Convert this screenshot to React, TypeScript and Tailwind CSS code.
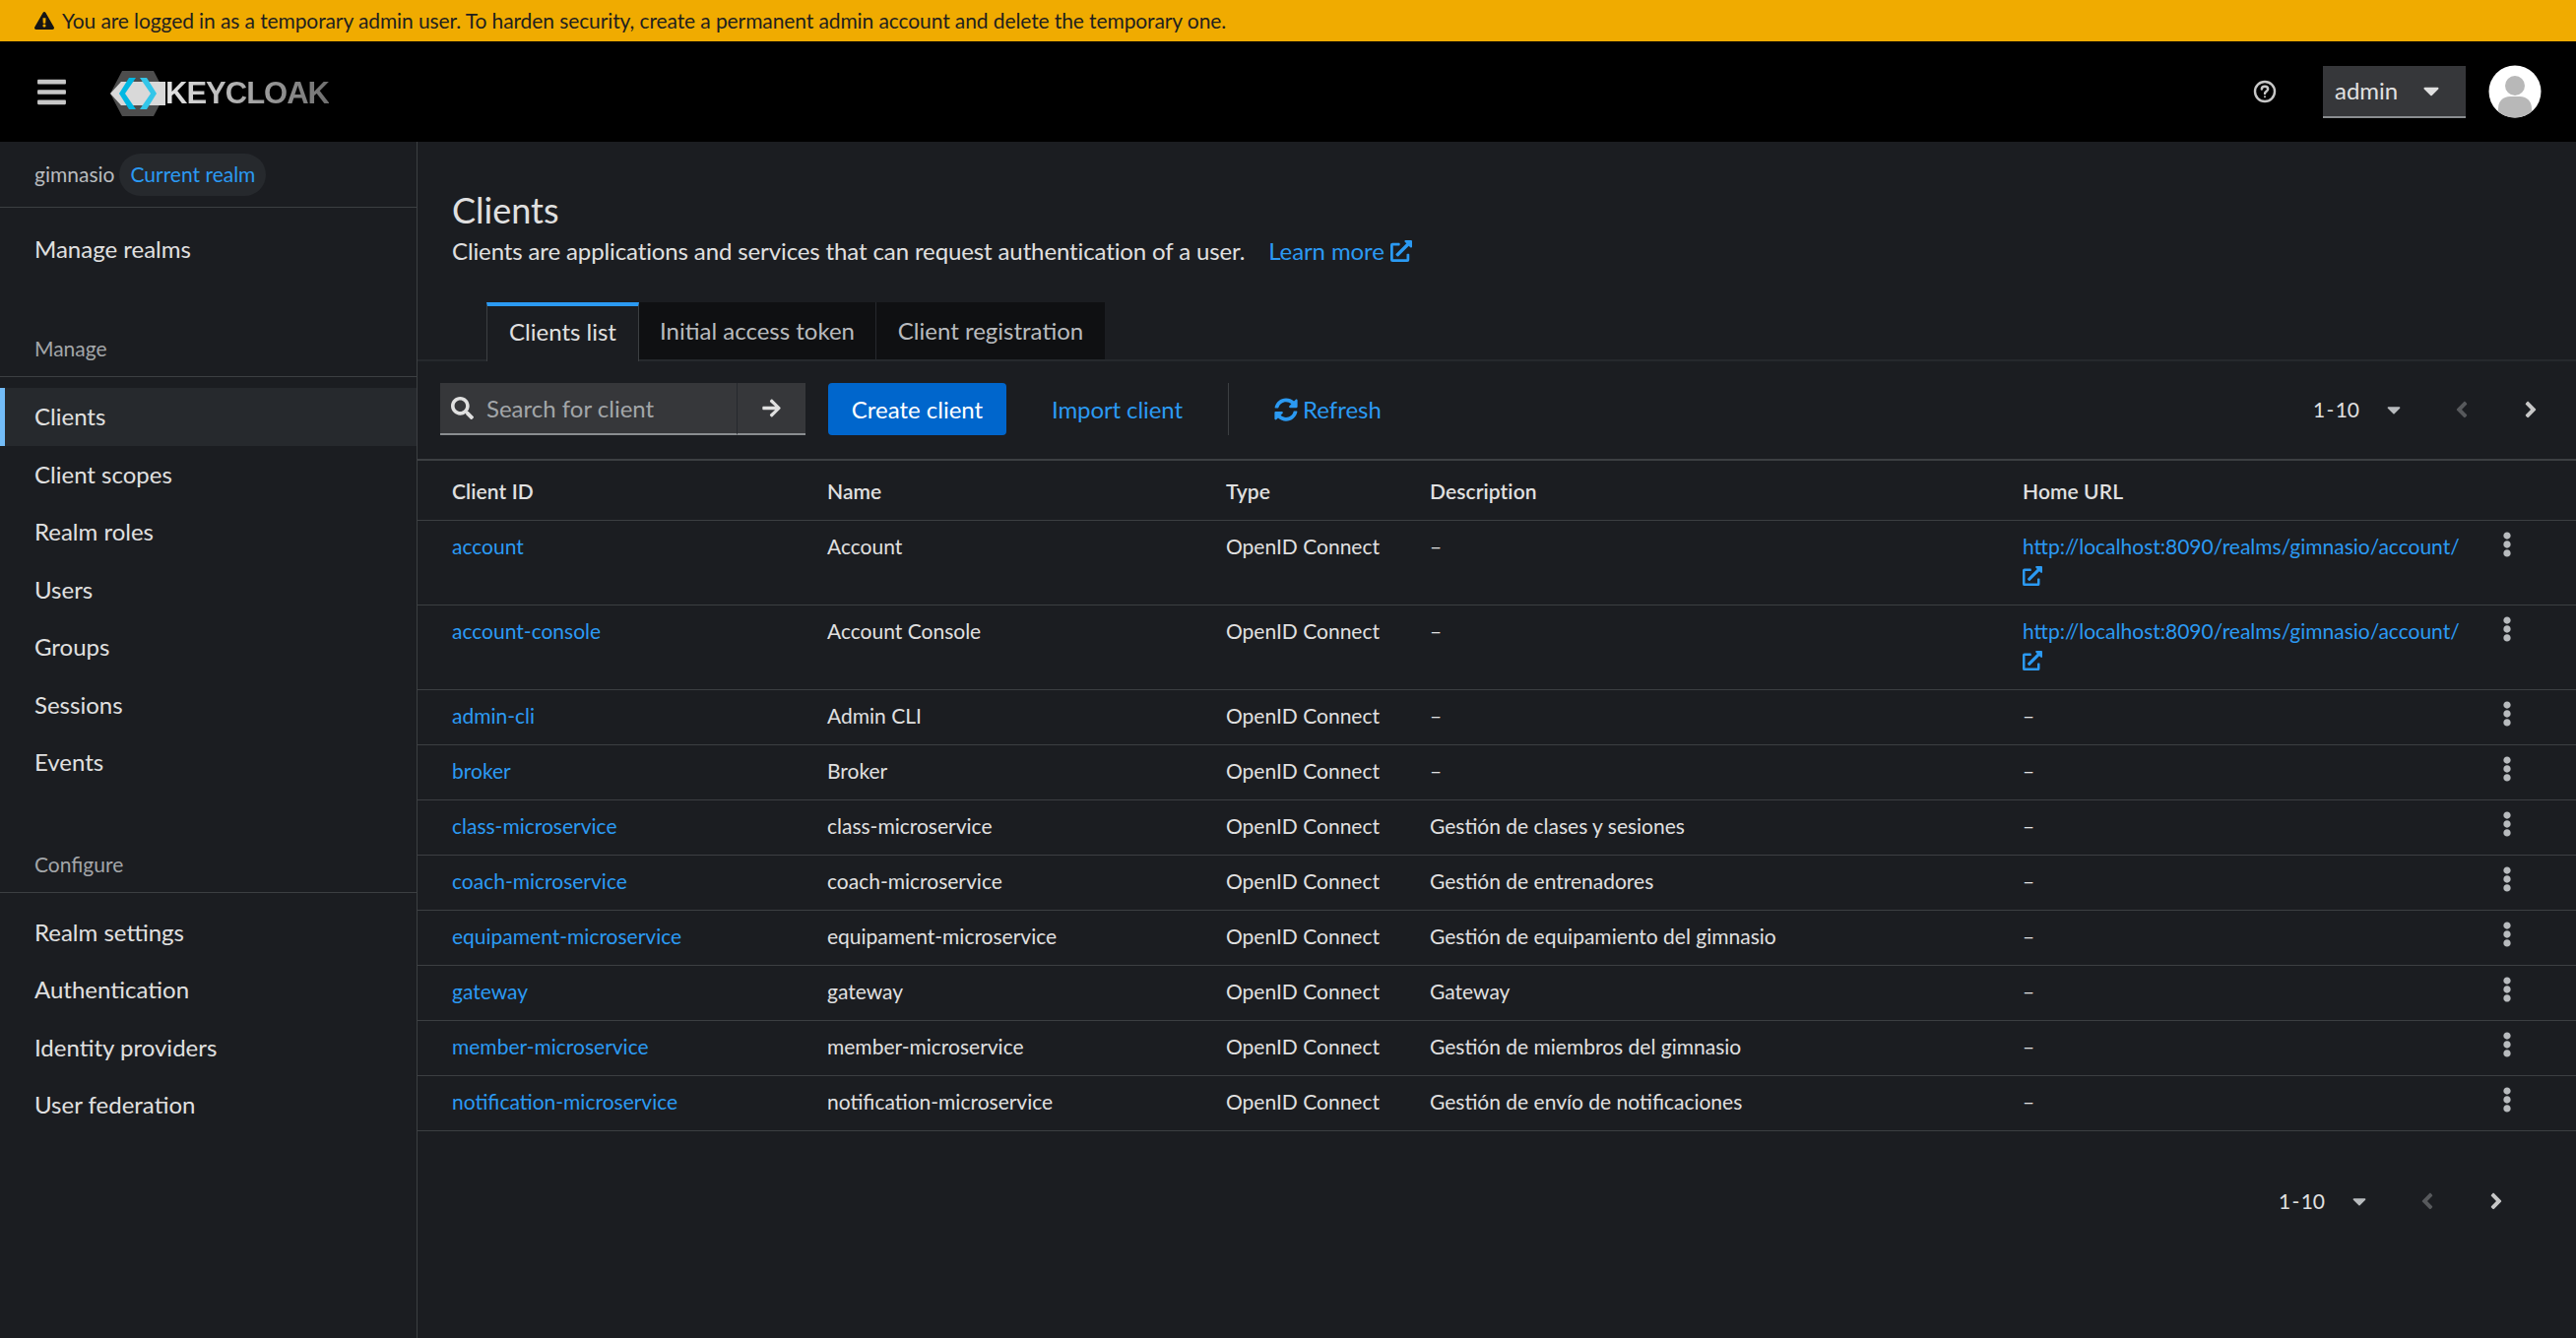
import React from "react";
import { FaExclamationTriangle, FaBars, FaCaretDown, FaExternalLinkAlt, FaSearch, FaArrowRight, FaSyncAlt, FaEllipsisV, FaAngleLeft, FaAngleRight } from "react-icons/fa";

const font = { fontFamily: 'Lato, "Noto Sans", sans-serif' };

function Logo() {
  return (
    <div className="flex items-center">
      <svg width="56" height="46" viewBox="0 0 56 46" className="shrink-0">
        <path d="M12 0 H44 L56 23 L44 46 H12 L0 23 Z" fill="#4d4d4d" />
        <path d="M0 23 L11 11 H56 V35 H11 Z" fill="#d9d9d9" />
        <path d="M19 7 L26 7 L15 23 L26 39 L19 39 L9 23 Z" fill="#00b8e3" />
        <path d="M37 7 L30 7 L41 23 L30 39 L37 39 L47 23 Z" fill="#33c6e9" />
      </svg>
      <span className="text-[31px] leading-none font-bold tracking-[-1px] bg-gradient-to-r from-[#e6e6e6] via-[#a8a8a8] to-[#6f6f6f] bg-clip-text text-transparent" style={{ fontFamily: '"Liberation Sans", sans-serif' }}>KEYCLOAK</span>
    </div>
  );
}

function HelpIcon() {
  return (
    <svg width="24" height="24" viewBox="0 0 24 24" fill="none" stroke="#c7c7c7" strokeWidth="2.4">
      <circle cx="12" cy="12" r="10" />
      <path d="M8.8 9.6 C8.8 7.6 10.4 6.8 12 6.8 C13.8 6.8 15.2 7.9 15.2 9.5 C15.2 11.6 12 11.8 12 14" strokeLinecap="round" />
      <circle cx="12" cy="17.2" r="1" fill="#c7c7c7" stroke="none" />
    </svg>
  );
}

function Avatar() {
  return (
    <svg width="54" height="54" viewBox="0 0 54 54" className="shrink-0">
      <clipPath id="av"><circle cx="27" cy="27" r="26.5" /></clipPath>
      <circle cx="27" cy="27" r="26.5" fill="#ffffff" />
      <g clipPath="url(#av)">
        <circle cx="27" cy="21" r="10" fill="#b8b8b8" />
        <path d="M10 54 V44 C10 36 16 32 22 32 H32 C38 32 44 36 44 44 V54 Z" fill="#b8b8b8" />
      </g>
    </svg>
  );
}

function Pager() {
  return (
    <div className="flex items-center text-[21px] text-[#e0e0e0]">
      <span className="leading-none whitespace-nowrap [word-spacing:-4px]">1 - 10</span>
      <FaCaretDown className="ml-[24px] text-[#b8bbbe] text-[22px]" />
      <FaAngleLeft className="ml-[45px] text-[#57595c] text-[26px]" />
      <FaAngleRight className="ml-[44px] text-[#c7c7c7] text-[26px]" />
    </div>
  );
}

function NavItem({ label, active }: { label: string; active?: boolean }) {
  return (
    <div className={active ? "h-[58.5px] pl-[30px] flex items-center border-l-[5px] border-[#73bcf7] bg-[#26292d] text-[24px] text-[#e0e0e0]" : "h-[58.5px] pl-[35px] flex items-center text-[24px] text-[#e0e0e0]"}>
      {label}
    </div>
  );
}

type Row = { id: string; name: string; desc: string; url?: boolean };
const rows: Row[] = [
  { id: "account", name: "Account", desc: "–", url: true },
  { id: "account-console", name: "Account Console", desc: "–", url: true },
  { id: "admin-cli", name: "Admin CLI", desc: "–" },
  { id: "broker", name: "Broker", desc: "–" },
  { id: "class-microservice", name: "class-microservice", desc: "Gestión de clases y sesiones" },
  { id: "coach-microservice", name: "coach-microservice", desc: "Gestión de entrenadores" },
  { id: "equipament-microservice", name: "equipament-microservice", desc: "Gestión de equipamiento del gimnasio" },
  { id: "gateway", name: "gateway", desc: "Gateway" },
  { id: "member-microservice", name: "member-microservice", desc: "Gestión de miembros del gimnasio" },
  { id: "notification-microservice", name: "notification-microservice", desc: "Gestión de envío de notificaciones" },
];

export default function App() {
  return (
    <div className="h-[1359px] w-[2616px] overflow-hidden flex flex-col bg-[#1b1d21] text-[#e0e0e0]" style={font}>
      <div className="h-[42px] shrink-0 bg-[#f0ab00] flex items-center pl-[35px] text-[21px] tracking-[-0.1px] text-[#1f1f1f]">
        <FaExclamationTriangle className="text-[20px] mr-[8px] text-[#151515]" />
        <span>You are logged in as a temporary admin user. To harden security, create a permanent admin account and delete the temporary one.</span>
      </div>
      <header className="h-[102px] shrink-0 bg-black flex items-center pl-[36px] pr-[35px]">
        <FaBars className="text-[33px] text-[#c7c7c7]" />
        <div className="ml-[43px] mt-[3px]"><Logo /></div>
        <div className="ml-auto flex items-center">
          <HelpIcon />
          <div className="ml-[47px] w-[145px] h-[53px] bg-[#36373a] border-b-2 border-[#8a8d90] flex items-center pl-[12px] text-[24px] text-[#e0e0e0]">
            <span>admin</span>
            <FaCaretDown className="ml-auto mr-[22px] text-[#e0e0e0] text-[26px]" />
          </div>
          <div className="ml-[23px]"><Avatar /></div>
        </div>
      </header>
      <div className="flex flex-1 min-h-0">
        <aside className="w-[424px] shrink-0 border-r border-[#3c3f42] flex flex-col">
          <div className="h-[67px] shrink-0 border-b border-[#3c3f42] pl-[35px] flex items-center text-[21px]">
            <span className="text-[#b8bbbe]">gimnasio</span>
            <span className="ml-[5px] h-[43px] px-[11px] rounded-full bg-[#26292d] text-[#2b9af3] flex items-center">Current realm</span>
          </div>
          <div className="pl-[35px] h-[84px] flex items-center text-[24px] text-[#e0e0e0]">Manage realms</div>
          <div className="mt-[38px] h-[50px] pl-[35px] pt-[5px] border-b border-[#3c3f42] text-[21px] text-[#a3a6a9] flex items-start">Manage</div>
          <div className="mt-[11px]">
            <NavItem label="Clients" active />
            {["Client scopes", "Realm roles", "Users", "Groups", "Sessions", "Events"].map((l) => <NavItem key={l} label={l} />)}
          </div>
          <div className="mt-[58px] h-[45px] pl-[35px] border-b border-[#3c3f42] text-[21px] text-[#a3a6a9] flex items-start">Configure</div>
          <div className="mt-[11px]">
            {["Realm settings", "Authentication", "Identity providers", "User federation"].map((l) => <NavItem key={l} label={l} />)}
          </div>
        </aside>
        <main className="flex-1 min-w-0 flex flex-col">
          <div className="pl-[35px] pt-[45px]">
            <h1 className="text-[36px] leading-[48px] text-[#e0e0e0]">Clients</h1>
            <p className="text-[24px] leading-[36px] flex items-center tracking-[-0.12px]">
              Clients are applications and services that can request authentication of a user.
              <span className="ml-[24px] text-[#2b9af3] flex items-center gap-[6px]">Learn more <FaExternalLinkAlt className="text-[22px]" /></span>
            </p>
          </div>
          <div className="mt-[34px] flex h-[60px] pl-[70px] border-b-2 border-[#26292d] text-[24px]">
            <div className="w-[155px] border-t-[4px] border-x border-t-[#2b9af3] border-x-[#3c3f42] pb-[5px] flex items-center justify-center text-[#e0e0e0] -mb-[2px] bg-[#1b1d21]">Clients list</div>
            <div className="w-[241px] bg-[#0f1012] border-r border-[#26292d] flex items-center justify-center text-[#b8bbbe]">Initial access token</div>
            <div className="w-[232px] bg-[#0f1012] flex items-center justify-center text-[#b8bbbe]">Client registration</div>
          </div>
          <div className="pt-[22px] pb-[24px] border-b-2 border-[#3c3f42] flex items-start pl-[23px] pr-[33px]">
            <div className="flex h-[53px] text-[24px]">
              <div className="w-[302px] bg-[#36373a] border-b-2 border-[#8a8d90] border-r border-r-[#26292d] flex items-center pl-[11px] text-[#a3a6a9]">
                <FaSearch className="text-[#e0e0e0] text-[23px] mr-[13px]" />
                Search for client
              </div>
              <div className="w-[69px] bg-[#36373a] border-b-2 border-[#8a8d90] flex items-center justify-center">
                <FaArrowRight className="text-[#e0e0e0] text-[21px]" />
              </div>
            </div>
            <div className="ml-[23px] h-[53px] w-[181px] rounded-[4px] bg-[#0066cc] flex items-center justify-center text-[24px] text-white">Create client</div>
            <div className="ml-[46px] h-[53px] flex items-center text-[24px] tracking-[-0.1px] text-[#2b9af3]">Import client</div>
            <div className="ml-[46px] h-[53px] w-px bg-[#3c3f42]" />
            <div className="ml-[46px] h-[53px] flex items-center text-[24px] text-[#2b9af3] gap-[5px]"><FaSyncAlt className="text-[24px]" />Refresh</div>
            <div className="ml-auto h-[53px] flex items-center"><Pager /></div>
          </div>
          <table className="w-full table-fixed border-collapse text-[21px]">
            <colgroup>
              <col className="w-[416px]" />
              <col className="w-[405px]" />
              <col className="w-[207px]" />
              <col className="w-[602px]" />
              <col />
              <col className="w-[110px]" />
            </colgroup>
            <thead>
              <tr className="h-[60px] border-b border-[#3c3f42] text-left">
                {["Client ID", "Name", "Type", "Description", "Home URL", ""].map((h, i) => (
                  <th key={i} className={i === 0 ? "pl-[35px] pt-[2px] font-semibold tracking-[0.1px] text-[#e0e0e0]" : "pt-[2px] font-semibold tracking-[0.1px] text-[#e0e0e0]"}>{h}</th>
                ))}
              </tr>
            </thead>
            <tbody>
              {rows.map((r) => (
                <tr key={r.id} className={r.url ? "h-[86px] border-b border-[#3c3f42] align-top" : "h-[56px] border-b border-[#3c3f42] align-top"}>
                  <td className="pl-[35px] pt-[11px] text-[#2b9af3] leading-[30px]">{r.id}</td>
                  <td className="pt-[11px] leading-[30px] text-[#e0e0e0]">{r.name}</td>
                  <td className="pt-[11px] leading-[30px] text-[#e0e0e0]">OpenID Connect</td>
                  <td className="pt-[11px] leading-[30px] text-[#e0e0e0]">{r.desc}</td>
                  <td className="pt-[11px] leading-[30px] text-[#e0e0e0]">
                    {r.url ? (
                      <div className="text-[#2b9af3]">
                        <div className="whitespace-nowrap">http://localhost:8090/realms/gimnasio/account/</div>
                        <FaExternalLinkAlt className="text-[20px] mt-[5px]" />
                      </div>
                    ) : "–"}
                  </td>
                  <td className="pt-[11px] pl-[27px]"><FaEllipsisV className="text-[26px] text-[#b8bbbe]" /></td>
                </tr>
              ))}
            </tbody>
          </table>
          <div className="mt-[58px] flex justify-end pr-[68px]"><Pager /></div>
        </main>
      </div>
    </div>
  );
}
